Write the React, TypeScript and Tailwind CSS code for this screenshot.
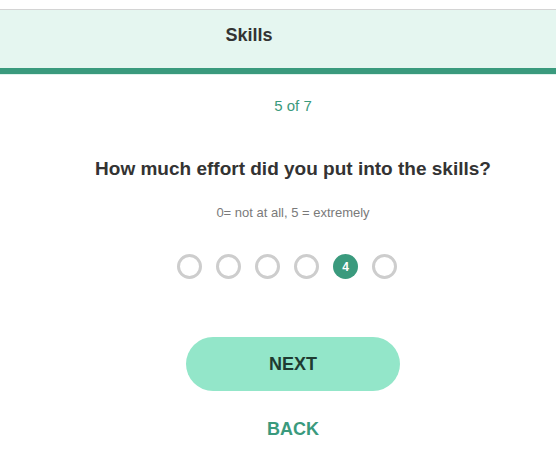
import { useState } from "react"

const options = [0, 1, 2, 3, 4, 5]

export default function App() {
  const [selected, setSelected] = useState(4)

  return (
    <div className="min-h-[468px] w-full bg-white font-['Liberation_Sans',Arial,sans-serif]">
      {/* Header */}
      <div className="pt-[9px]">
        <div className="border-t border-[#d4d4d4] bg-[#e5f6f0]">
          <div className="flex h-[58px] items-start justify-center pt-[14px] pr-[58px]">
            <h1 className="text-[18px] font-bold leading-[22px] text-[#333333]">Skills</h1>
          </div>
          <div className="h-[6px] bg-[#3a9a7d]" />
        </div>
        <div className="h-px bg-[#dff3ec]" />
      </div>

      {/* Body */}
      <div className="flex flex-col items-center pl-[30px]">
        <p className="mt-[22px] text-[15px] leading-[18px] text-[#3a9a7d]">5 of 7</p>

        <h2 className="mt-[43px] text-[19px] font-bold leading-[22px] text-[#333333]">
          How much effort did you put into the skills?
        </h2>

        <p className="mt-[25px] text-[13px] leading-[16px] text-[#7a7a7a]">0= not at all, 5 = extremely</p>

        <div className="mt-[33px] flex gap-[14px] pr-[12px]">
          {options.map((n) => {
            const active = n === selected
            return (
              <button
                key={n}
                onClick={() => setSelected(n)}
                className={
                  active
                    ? "flex h-[25px] w-[25px] items-center justify-center rounded-full bg-[#3a9a7d] text-[12px] font-bold text-white"
                    : "h-[25px] w-[25px] rounded-full border-[3px] border-[#cdcdcd] bg-white"
                }
              >
                {active ? n : null}
              </button>
            )
          })}
        </div>

        <button className="mt-[58px] h-[54px] w-[214px] rounded-full bg-[#93e6c9] text-[18px] font-bold text-[#1f3b31]">
          NEXT
        </button>

        <button className="mt-[27px] text-[18px] font-bold leading-[22px] text-[#3a9a7d]">BACK</button>
      </div>
    </div>
  )
}
